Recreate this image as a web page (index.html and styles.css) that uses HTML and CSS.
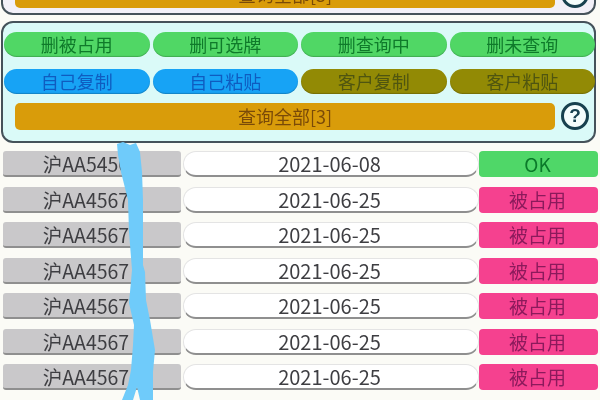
FILE: index.html
```html
<!DOCTYPE html>
<html lang="zh-CN">

<head>
    <meta charset="UTF-8">
    <title>查询</title>
    <link rel="stylesheet" href="styles.css">
</head>

<body>
    <div class="page">
        <!-- 上一个面板，只露出底部 -->
        <div class="panel panel-top">
            <div class="query-row">
                <div class="query-bar">查询全部[3]</div>
                <div class="help">?</div>
            </div>
        </div>

        <div class="panel panel-main">
            <div class="btn-grid">
                <div class="pill green">删被占用</div>
                <div class="pill green">删可选牌</div>
                <div class="pill green">删查询中</div>
                <div class="pill green">删未查询</div>
                <div class="pill blue">自己复制</div>
                <div class="pill blue">自己粘贴</div>
                <div class="pill olive">客户复制</div>
                <div class="pill olive">客户粘贴</div>
            </div>
            <div class="query-row">
                <div class="query-bar">查询全部[3]</div>
                <div class="help">?</div>
            </div>
        </div>

        <div class="rows">
            <div class="row">
                <div class="plate">沪AA5456</div>
                <div class="date">2021-06-08</div>
                <div class="status ok">OK</div>
            </div>
            <div class="row">
                <div class="plate">沪AA4567</div>
                <div class="date">2021-06-25</div>
                <div class="status taken">被占用</div>
            </div>
            <div class="row">
                <div class="plate">沪AA4567</div>
                <div class="date">2021-06-25</div>
                <div class="status taken">被占用</div>
            </div>
            <div class="row">
                <div class="plate">沪AA4567</div>
                <div class="date">2021-06-25</div>
                <div class="status taken">被占用</div>
            </div>
            <div class="row">
                <div class="plate">沪AA4567</div>
                <div class="date">2021-06-25</div>
                <div class="status taken">被占用</div>
            </div>
            <div class="row">
                <div class="plate">沪AA4567</div>
                <div class="date">2021-06-25</div>
                <div class="status taken">被占用</div>
            </div>
            <div class="row">
                <div class="plate">沪AA4567</div>
                <div class="date">2021-06-25</div>
                <div class="status taken">被占用</div>
            </div>
            <div class="row">
                <div class="plate">沪AA4567</div>
                <div class="date">2021-06-25</div>
                <div class="status taken">被占用</div>
            </div>
        </div>

        <!-- 手画的涂抹线 -->
        <svg class="scribble" width="600" height="400" viewBox="0 0 600 400">
            <path d="M117 144 L123 142 L130 145 L136 143 L140 152 L142 172 L143 200 L143 232 L143 265 L145 272 L146 300 L150 320 L155 350 L153 372 L153 385 L153 400 L140 400 L137 387 L133 400 L122 400 L128 385 L131 370 L133 345 L134 325 L129 303 L132 270 L129 232 L128 200 L121 172 L118 155 Z" />
        </svg>
    </div>
</body>

</html>
```

FILE: styles.css
```css
/* 基本重置 */
* {
    margin: 0;
    padding: 0;
    box-sizing: border-box;
}

body {
    font-family: "Noto Sans CJK SC", "Liberation Sans", sans-serif;
    background: #fbfbf6;
}

/* 原图是模糊的照片 */
.page {
    position: relative;
    width: 600px;
    height: 400px;
    overflow: hidden;
    background: #fbfbf6;
    filter: blur(0.5px);
}

/* 面板 */
.panel {
    width: 595px;
    margin-left: 1px;
    border: 2px solid #45525a;
    border-radius: 12px;
}

.panel-top {
    height: 46px;
    margin-top: -31px;
    padding: 9px 0 0 12px;
    background: #f2f0f8;
}

.panel-main {
    height: 122px;
    margin-top: 6px;
    padding: 8px 0 0 1px;
    background: #dafaf8;
}

.btn-grid {
    display: grid;
    grid-template-columns: repeat(4, 145.5px);
    grid-auto-rows: 25px;
    column-gap: 3px;
    row-gap: 12px;
    padding-top: 1px;
}

.pill {
    height: 25px;
    border-radius: 13px;
    font-size: 18px;
    line-height: 25px;
    text-align: center;
    box-shadow: inset 0 -1px 1px rgba(0, 0, 0, 0.2);
}

.green {
    background: #50d765;
    color: #0f7a2a;
}

.blue {
    background: #17a3f5;
    color: #0f5cc0;
}

.olive {
    background: #928a05;
    color: #4f5510;
}

.query-row {
    display: flex;
    align-items: center;
}

.panel-main .query-row {
    margin: 8px 0 0 11px;
}

.query-bar {
    width: 540px;
    height: 27px;
    border-radius: 5px;
    background: #d99c0a;
    color: #7a4a08;
    font-size: 18px;
    line-height: 27px;
    text-align: center;
}

.help {
    width: 28px;
    height: 28px;
    margin-left: 6px;
    border: 3px solid #17414f;
    border-radius: 50%;
    background: #f4fdfc;
    color: #17414f;
    font-family: "Liberation Sans", sans-serif;
    font-size: 19px;
    font-weight: bold;
    line-height: 22px;
    text-align: center;
}

/* 列表 */
.rows {
    display: flex;
    flex-direction: column;
    gap: 9.5px;
    margin-top: 8px;
    padding-left: 3px;
}

.row {
    display: flex;
    flex-shrink: 0;
    width: 595px;
    height: 26px;
    line-height: 26px;
    text-align: center;
    color: #3e3e42;
}

.plate {
    width: 178px;
    padding-right: 12px;
    border-bottom: 2px solid #8f8f8f;
    border-radius: 3px;
    background: #c9c8ca;
    font-size: 19.5px;
    line-height: 25px;
}

.date {
    width: 296px;
    margin-left: 2px;
    padding-right: 3px;
    border: 1px solid #e4e4e4;
    border-bottom: 2px solid #8f8f8f;
    border-radius: 13px;
    background: #fff;
    font-size: 20px;
    line-height: 23px;
}

.status {
    width: 119px;
    margin-left: 0;
    padding-right: 2px;
    border-radius: 4px;
    font-size: 19px;
}

.ok {
    background: #4fd768;
    color: #0b7a2a;
}

.taken {
    background: #f5418f;
    color: #8c1a5c;
}

/* 涂抹线 */
.scribble {
    position: absolute;
    top: 0;
    left: 0;
    pointer-events: none;
}

.scribble path {
    fill: #6fcbfa;
}
```
